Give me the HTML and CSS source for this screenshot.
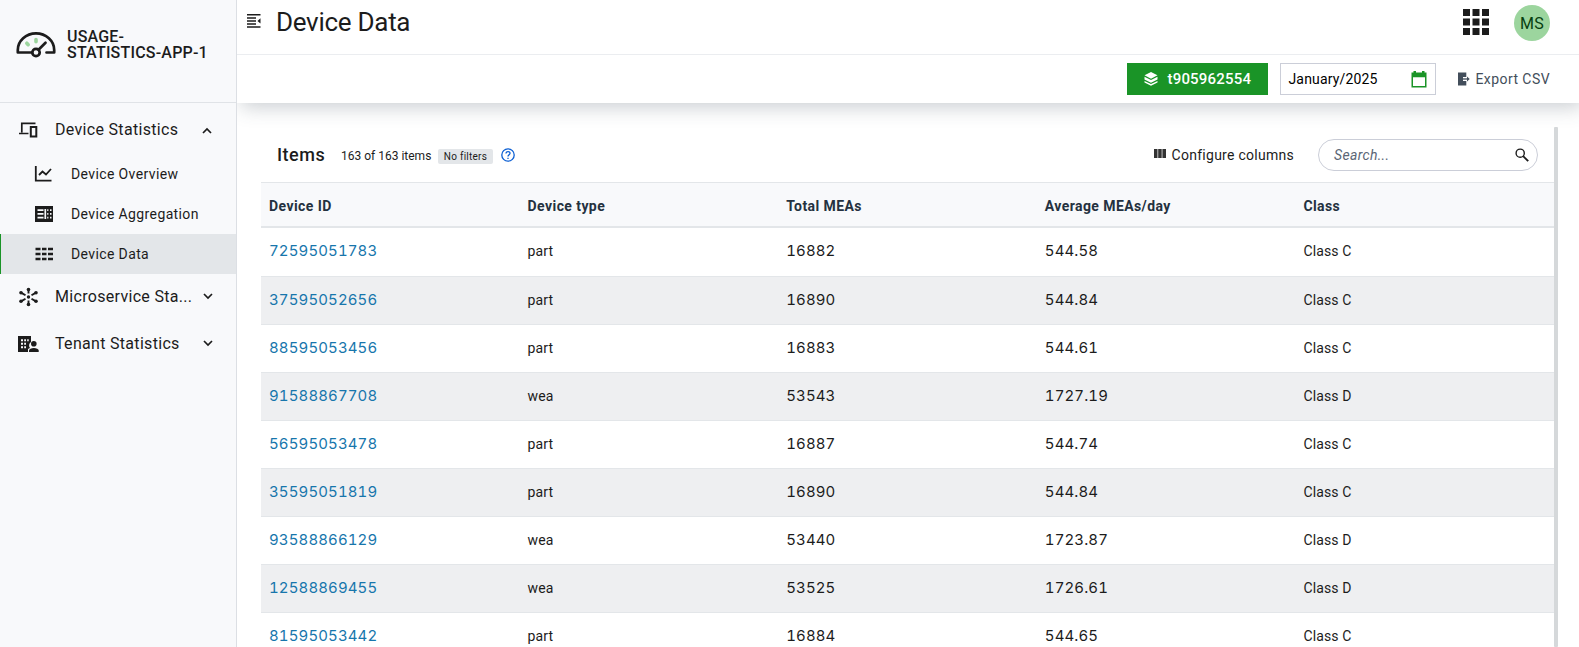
FILE: index.html
```html
<!DOCTYPE html>
<html lang="en">
<head>
<meta charset="utf-8">
<title>Device Data</title>
<link rel="stylesheet" href="styles.css">
</head>
<body>
<div class="app">
  <aside class="sidebar">
    <div class="brand">
      <svg class="brand-logo" width="40" height="26" viewBox="0 0 40 26" fill="none">
        <path d="M16 20.500H1.800V18a18.200 16.600 0 0 1 36.400 0v2.500H30.500" stroke="#1c1c1c" stroke-width="2.700" stroke-linejoin="round" stroke-linecap="round"/>
        <path d="M22.500 17.800l7-7" stroke="#1c1c1c" stroke-width="2.700" stroke-linecap="round"/>
        <circle cx="20" cy="20.500" r="3.700" stroke="#1c1c1c" stroke-width="2.700"/>
        <path d="M20 7.500v2.200M10.800 11.200l1.400 1.500" stroke="#9cd59e" stroke-width="3.600" stroke-linecap="round"/>
      </svg>
      <div class="brand-name">USAGE-<br>STATISTICS-APP-1</div>
    </div>
    <nav class="nav">
      <div class="nav-group open">
        <svg class="nav-icon" width="20" height="20" viewBox="0 0 20 20" fill="none" stroke="#1c1c1c" stroke-width="1.700"><path d="M3.300 12.500V3.300H17M0.500 13.500H10"/><path d="M12.300 7h5.500v9.400h-5.500z" stroke-width="2"/></svg>
        <span class="nav-label">Device Statistics</span>
        <svg class="chev" width="10" height="7" viewBox="0 0 10 7" fill="none" stroke="#1c1c1c" stroke-width="1.700"><path d="M1 6l4-4 4 4"/></svg>
      </div>
      <div class="nav-item">
        <svg width="20" height="18" viewBox="0 0 20 18" fill="none" stroke="#1c1c1c" stroke-width="1.800"><path d="M1.800 1v14.700h15.700M5 10l3.500-3.500 3.500 3 5-5.500"/></svg>
        <span>Device Overview</span>
      </div>
      <div class="nav-item">
        <svg width="20" height="18" viewBox="0 0 20 18"><path fill="#1c1c1c" d="M1 1h18v16H1z"/><path d="M3.500 5.200h6M3.500 8.900h6M3.500 12.600h6M13.200 5.200h1.200M16 5.200h1.500M13.200 8.900h1.200M16 8.900h1.500M13.200 12.600h1.200M16 12.600h1.500M11.300 4v10" stroke="#f8f9fb" stroke-width="1.700"/></svg>
        <span>Device Aggregation</span>
      </div>
      <div class="nav-item active">
        <svg width="20" height="14" viewBox="0 0 20 14" fill="#1c1c1c"><path d="M1.500.700h5v2.600h-5zM8 .700h4.500v2.600H8zM14 .700h5v2.600h-5zM1.500 5.700h5v2.600h-5zM8 5.700h4.500v2.600H8zM14 5.700h5v2.600h-5zM1.500 10.700h5v2.600h-5zM8 10.700h4.500v2.600H8zM14 10.700h5v2.600h-5z"/></svg>
        <span>Device Data</span>
      </div>
      <div class="nav-group short">
        <svg class="nav-icon" width="20" height="20" viewBox="0 0 20 20" fill="#1c1c1c" stroke="#1c1c1c"><path stroke-width="1.900" fill="none" d="M10 2v4.500M10 13.500V18M2.500 5.600l4.500 2.700M17.500 5.600L13 8.300M2.500 14.400L7 11.700M17.500 14.400L13 11.700"/><g stroke="none"><circle cx="10" cy="10" r="1.700"/><circle cx="10" cy="2.500" r="1.800"/><circle cx="10" cy="17.500" r="1.800"/><circle cx="2.500" cy="5.700" r="1.800"/><circle cx="17.500" cy="5.700" r="1.800"/><circle cx="2.500" cy="14.300" r="1.800"/><circle cx="17.500" cy="14.300" r="1.800"/></g></svg>
        <span class="nav-label">Microservice Sta...</span>
        <svg class="chev" width="10" height="7" viewBox="0 0 10 7" fill="none" stroke="#1c1c1c" stroke-width="1.700"><path d="M1 1l4 4 4-4"/></svg>
      </div>
      <div class="nav-group">
        <svg class="nav-icon" width="21" height="18" viewBox="0 0 21 18"><path fill="#1c1c1c" d="M0 1h13v6a4 4 0 0 0-1 6l-2 1v3H0z"/><path d="M3 5.200h2M6.200 5.200h1.800M9.200 5.200h1.500M3 8.700h2M6.200 8.700h1.800M3 12.200h2M6.200 12.200h1.800" stroke="#f8f9fb" stroke-width="1.900"/><circle cx="15.800" cy="8.700" r="2.800" fill="#1c1c1c"/><path fill="#1c1c1c" d="M11 17v-1.500c0-3.500 9.700-3.500 9.700 0V17z"/></svg>
        <span class="nav-label">Tenant Statistics</span>
        <svg class="chev" width="10" height="7" viewBox="0 0 10 7" fill="none" stroke="#1c1c1c" stroke-width="1.700"><path d="M1 1l4 4 4-4"/></svg>
      </div>
    </nav>
  </aside>
  <main class="main">
    <header class="header">
      <svg class="collapse" width="14" height="14" viewBox="0 0 14 14"><path d="M0 .800h13.500M0 3.900h9M0 7h9M0 10h9M0 13h13.500" stroke="#1c1c1c" stroke-width="1.500"/><path d="M13.500 4.300v5.200L10.500 6.900z" fill="#1c1c1c"/></svg>
      <h1 class="title">Device Data</h1>
      <svg class="apps" width="26" height="26" viewBox="0 0 26 26" fill="#1c1c1c"><path d="M0 0h7v7H0zM9.500 0h7v7h-7zM19 0h7v7h-7zM0 9.500h7v7H0zM9.500 9.500h7v7h-7zM19 9.500h7v7h-7zM0 19h7v7H0zM9.500 19h7v7h-7zM19 19h7v7h-7z"/></svg>
      <div class="avatar">MS</div>
    </header>
    <div class="toolbar">
      <button class="tenant">
        <svg width="14" height="14" viewBox="0 0 14 14" fill="#fff"><path d="M7 0l6.500 3.300L7 6.700.500 3.300zM.500 4.700L7 8l6.500-3.300v2.800L7 10.800.500 7.500zM.500 8.900L7 12.100l6.500-3.200v1.700L7 13.800.500 10.600z"/></svg>
        <span>t905962554</span>
      </button>
      <div class="date"><span>January/2025</span>
        <svg width="16" height="17" viewBox="0 0 16 17" fill="#1a9427"><path fill-rule="evenodd" d="M2.500 0H5v1.500h6V0h2.500v1.500h2V16.500H.500V1.500h2zM2 6.200V15h12V6.200z"/></svg>
      </div>
      <div class="export">
        <svg width="12" height="14" viewBox="0 0 12 14"><path fill="#434e5b" d="M0 .500h8.300V5H5v4h3.300v4.500H0z"/><path d="M4.500 7h5.500" stroke="#434e5b" stroke-width="1.300"/><path fill="#434e5b" d="M9 4.500L11.700 7 9 9.500z"/></svg>
        <span>Export CSV</span>
      </div>
    </div>
    <section class="content">
      <div class="panel">
        <div class="panel-head">
          <h2 class="items">Items</h2>
          <span class="count">163 of 163 items</span>
          <span class="badge">No filters</span>
          <svg class="help" width="14" height="14" viewBox="0 0 14 14" fill="none" stroke="#0b5fd3" stroke-width="1.300"><circle cx="7" cy="7" r="6.200"/><path d="M5 5.600C5 2.800 9.200 3 9 5.500c-.1 1.200-2 1.400-2 3M7 9.700v1.400"/></svg>
          <div class="configure">
            <svg width="12" height="9" viewBox="0 0 12 9" fill="#333"><path d="M0 0h3.500v9H0zM4.200 0h3.500v9H4.200zM8.400 0H12v9H8.400z"/></svg>
            <span>Configure columns</span>
          </div>
          <div class="search"><span>Search...</span>
            <svg width="14" height="14" viewBox="0 0 14 14" fill="none" stroke="#1c1c1c"><circle cx="5.200" cy="5.200" r="4.100" stroke-width="1.400"/><path d="M8.200 8.200l5 5" stroke-width="1.900"/></svg>
          </div>
        </div>
        <div class="row head"><span>Device ID</span><span>Device type</span><span>Total MEAs</span><span>Average MEAs/day</span><span>Class</span></div>
        <div class="row first"><a>72595051783</a><span>part</span><span class="num">16882</span><span class="num">544.58</span><span>Class C</span></div>
        <div class="row alt"><a>37595052656</a><span>part</span><span class="num">16890</span><span class="num">544.84</span><span>Class C</span></div>
        <div class="row"><a>88595053456</a><span>part</span><span class="num">16883</span><span class="num">544.61</span><span>Class C</span></div>
        <div class="row alt"><a>91588867708</a><span>wea</span><span class="num">53543</span><span class="num">1727.19</span><span>Class D</span></div>
        <div class="row"><a>56595053478</a><span>part</span><span class="num">16887</span><span class="num">544.74</span><span>Class C</span></div>
        <div class="row alt"><a>35595051819</a><span>part</span><span class="num">16890</span><span class="num">544.84</span><span>Class C</span></div>
        <div class="row"><a>93588866129</a><span>wea</span><span class="num">53440</span><span class="num">1723.87</span><span>Class D</span></div>
        <div class="row alt"><a>12588869455</a><span>wea</span><span class="num">53525</span><span class="num">1726.61</span><span>Class D</span></div>
        <div class="row"><a>81595053442</a><span>part</span><span class="num">16884</span><span class="num">544.65</span><span>Class C</span></div>
      </div>
      <div class="scrollbar"></div>
    </section>
  </main>
</div>
</body>
</html>
```
FILE: styles.css
```css
* { box-sizing: border-box; }
body { margin: 0; font-family: Roboto, "Liberation Sans", sans-serif; font-size: 14px; color: #1c1c1c; background: #fff; }
svg { flex: none; display: block; }
.app { display: flex; width: 1579px; height: 647px; overflow: hidden; }
.sidebar { width: 237px; flex: none; background: #f8f9fb; border-right: 1px solid #dcdfe4; }
.brand { height: 103px; border-bottom: 1px solid #e0e3e7; display: flex; align-items: flex-start; padding: 28px 0 0 16px; }
.brand-logo { margin-top: 4px; }
.brand-name { margin-left: 11px; padding-top: 1px; font-size: 16px; line-height: 16px; font-weight: 500; letter-spacing: .2px; white-space: nowrap; }
.nav { padding-top: 3px; }
.nav-group { height: 47px; display: flex; align-items: center; padding: 0 23px 0 18px; font-size: 16px; letter-spacing: .31px; white-space: nowrap; }
.nav-group.open { height: 48px; padding-bottom: 1px; }
.nav-group.open .chev { margin: 1px 1px 0 0; }
.nav-group.short { height: 46px; padding-bottom: 1px; }
.nav-icon { width: 21px; }
.nav-label { margin-left: 16px; flex: 1; }
.nav-item { height: 40px; display: flex; align-items: center; gap: 17px; padding-left: 34px; letter-spacing: .38px; white-space: nowrap; }
.nav-item.active { background: #e3e6e9; border-left: 1px solid #1a9427; padding-left: 33px; }
.main { flex: 1; min-width: 0; display: flex; flex-direction: column; }
.header { height: 55px; flex: none; border-bottom: 1px solid #ebedf0; display: flex; align-items: flex-start; padding: 0 29px 0 10px; }
.collapse { margin-top: 14px; }
.title { margin: 6px auto 0 15px; font-size: 26px; line-height: 32px; font-weight: 400; letter-spacing: -.28px; white-space: nowrap; }
.apps { margin: 9px 25px 0 0; }
.avatar { width: 36px; height: 36px; margin-top: 5px; border-radius: 50%; background: #9cd59e; color: #073f10; font-size: 16px; line-height: 37px; text-align: center; letter-spacing: .2px; }
.toolbar { height: 48px; flex: none; display: flex; align-items: flex-start; justify-content: flex-end; padding: 8px 29px 0 0; box-shadow: 4px 4px 20px rgba(60, 75, 90, .28); clip-path: inset(0 0 -30px 0); background: #fff; z-index: 1; }
.tenant { width: 141px; height: 32px; border: 0; background: #1a9427; color: #fff; font: 500 15px Roboto, sans-serif; letter-spacing: .2px; display: flex; align-items: center; padding: 0 0 0 17px; gap: 9px; }
.date { margin-left: 12px; width: 156px; height: 32px; border: 1px solid #cbced8; display: flex; align-items: center; justify-content: space-between; padding: 0 8px 0 7px; letter-spacing: .16px; color: #000; }
.export { margin-left: 22px; height: 32px; display: flex; align-items: center; gap: 5px; color: #434e5b; letter-spacing: .43px; white-space: nowrap; }
.content { flex: 1; min-height: 0; display: flex; padding: 24px 0 0 24px; }
.panel { width: 1293px; }
.panel-head { height: 55px; display: flex; align-items: center; padding: 0 16px; white-space: nowrap; }
.items { margin: 0; width: 49px; font-size: 18px; font-weight: 500; letter-spacing: .5px; }
.count { margin: 2px 0 0 15px; width: 90px; font-size: 12px; }
.badge { margin: 3px 0 0 7px; width: 55px; height: 15px; border-radius: 2px; background: #e3e6e9; font-size: 10px; line-height: 15px; letter-spacing: .25px; text-align: center; }
.help { margin-left: 8px; }
.configure { margin-left: auto; display: flex; align-items: center; gap: 6px; letter-spacing: .27px; }
.configure svg { margin-top: -2px; }
.search { margin-left: 24px; width: 220px; height: 32px; border: 1px solid #cbced8; border-radius: 16px; display: flex; align-items: center; justify-content: space-between; padding: 0 8px 0 15px; font-style: italic; letter-spacing: .33px; color: #5b6675; }
.row { height: 48px; display: grid; grid-template-columns: repeat(5, 1fr); align-items: center; padding-bottom: 2px; border-bottom: 1px solid #e3e6e9; letter-spacing: .15px; }
.row > * { margin-left: 8px; justify-self: start; white-space: nowrap; }
.row.first { height: 49px; padding-bottom: 3px; }
.row.alt { background: #eeeff1; }
.row.head { height: 46px; padding: 2px 0 0; border-top: 1px solid #e3e6e9; border-bottom-width: 2px; background: #f8f9fb; font-weight: 700; letter-spacing: .42px; color: #243140; }
.row a { color: #1776ac; }
.row a, .row .num { font-family: Inter, Roboto, sans-serif; font-size: 15px; font-variant-numeric: tabular-nums; letter-spacing: .12px; }
.scrollbar { width: 4px; background: #d5d8da; border-radius: 1px; }
```
